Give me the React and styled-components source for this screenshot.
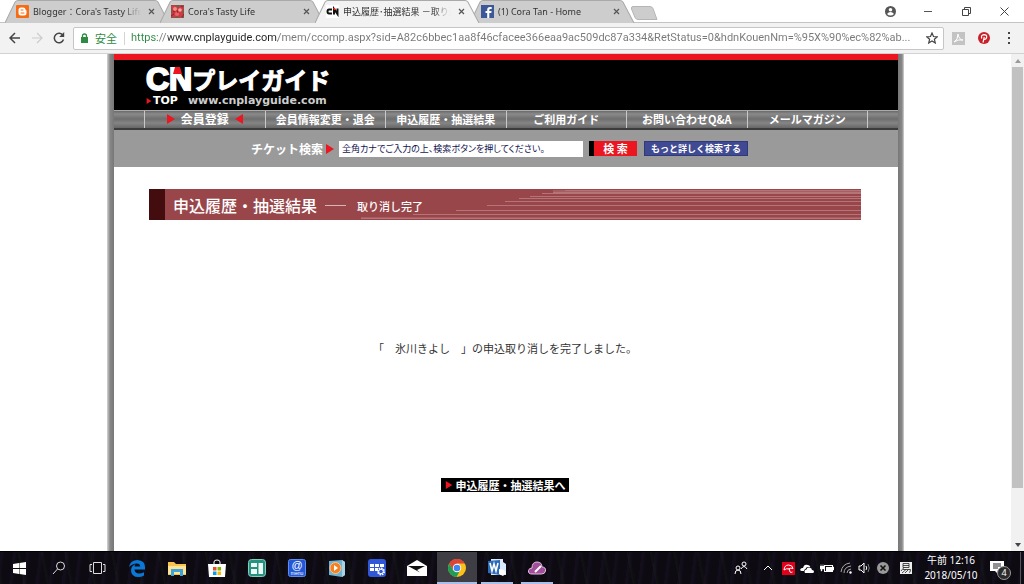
import React from "react";
import styled, { createGlobalStyle, css } from "styled-components";

const latin = `"Noto Sans", "Noto Sans CJK JP", sans-serif`;
const jp = `"Noto Sans CJK JP", sans-serif`;

const GlobalStyle = createGlobalStyle`
  * { box-sizing: border-box; }
  body { margin: 0; background: #fff; color: #333; font: 11px/16px ${jp}; }
  button, input { font: inherit; margin: 0; padding: 0; border: 0; border-radius: 0; background: none; color: inherit; }
  svg { display: block; flex: none; }
`;

const Window = styled.div`
  display: flex;
  flex-direction: column;
  min-height: 100vh;
`;

/* ---------- tab strip ---------- */

const TabStrip = styled.div`
  display: flex;
  height: 23px;
  padding-left: 5px;
  background: #fff;
  border-bottom: 1px solid #c4c4c4;
`;

const TabList = styled.div`
  display: flex;
  flex: 1;
  min-width: 0;
`;

const TabBox = styled.div`
  position: relative;
  z-index: ${(p) => (p.$active ? 2 : 1)};
  display: flex;
  align-items: center;
  gap: 4px;
  flex: 0 1 165px;
  min-width: 0;
  height: 23px;
  padding: 0 13px 0 11px;
  margin-right: -10px;
  font: 9px/16px ${latin};
  color: #333;
`;

const TabShape = styled.svg`
  position: absolute;
  inset: 0;
  z-index: -1;
  width: 100%;
  height: 100%;
`;

const TabTitle = styled.span`
  flex: 1;
  min-width: 0;
  overflow: hidden;
  white-space: nowrap;
  mask-image: linear-gradient(90deg, #000 calc(100% - 18px), transparent);
`;

const IconButton = styled.button`
  display: grid;
  place-items: center;
  flex: none;
  width: ${(p) => p.$w || 12}px;
  height: ${(p) => p.$h || 16}px;
`;

const NewTab = styled.button`
  width: 28px;
  height: 14px;
  margin: 6px 0 0 5px;
`;

const WindowControls = styled.div`
  display: flex;
  align-items: center;
  padding-right: 1px;
`;

/* ---------- toolbar ---------- */

const Toolbar = styled.div`
  display: flex;
  align-items: center;
  height: 31px;
  padding: 0 2px 0 3px;
  background: #f2f2f2;
  border-bottom: 1px solid #d2d2d2;
`;

const AddressBar = styled.div`
  display: flex;
  align-items: center;
  flex: 1;
  min-width: 0;
  height: 23px;
  margin-left: 3px;
  padding-left: 7px;
  background: #fff;
  border: 1px solid #c6c6c6;
  border-radius: 2px;
`;

const Secure = styled.span`
  margin-left: 7px;
  padding-right: 7px;
  border-right: 1px solid #d4d4d4;
  font-size: 11px;
  line-height: 13px;
  color: #2f8a43;
`;

const UrlInput = styled.input`
  flex: 1;
  min-width: 0;
  height: 20px;
  margin-left: 6px;
  font: 11px/20px Roboto, sans-serif;
  color: transparent;
  background: linear-gradient(90deg, #2f8a43 27px, #777 27px 37px, #222 37px 147px, #777 147px);
  background-clip: text;
  -webkit-background-clip: text;
`;

/* ---------- page ---------- */

const Viewport = styled.div`
  display: flex;
  flex: 1;
  background: #fff;
`;

const Scroller = styled.div`
  flex: 1;
  display: flex;
  justify-content: center;
  min-width: 0;
`;

const Site = styled.div`
  width: 100%;
  max-width: 797px;
  padding: 0 6px 0 7px;
  background:
    linear-gradient(90deg, #d5d5d5, #888 3px, #777 7px) left / 7px 100% no-repeat,
    linear-gradient(90deg, #777, #888 4px, #d5d5d5 6px) right / 6px 100% no-repeat;
`;

const Header = styled.header`
  height: 56px;
  padding: 6px 0 0 32px;
  background: #000;
  border-top: 6px solid #ec1620;
  color: #fff;
`;

const Logo = styled.a`
  display: inline-block;
  color: #fff;
  text-decoration: none;
`;

const LogoName = styled.span`
  display: flex;
  align-items: center;
  height: 27px;
  font: bold 23px/27px ${jp};
  -webkit-text-stroke: 1px #fff;
`;

const LogoMark = styled.span`
  position: relative;
  font: bold 32px/27px "Liberation Sans", sans-serif;
  -webkit-text-stroke: 2px #fff;
`;

const LogoAccent = styled.svg`
  position: absolute;
  left: 27px;
  top: 1px;
`;

const LogoLine = styled.span`
  display: flex;
  align-items: center;
  gap: 1px;
  height: 11px;
  margin-top: 2px;
  font: bold 11px/11px "DejaVu Sans", sans-serif;
`;

const LogoUrl = styled.span`
  margin-left: 9px;
  color: #ccc;
`;

const Nav = styled.nav`
  display: flex;
  height: 20px;
  padding: 0 30px;
  border-top: 1px solid #aaa;
  border-bottom: 2px solid #3c3c3c;
  background: linear-gradient(#6a6a6a, #8a8a8a 3px, #6e6e6e 8px, #858585 12px, #666);
`;

const NavLink = styled.a`
  display: flex;
  align-items: center;
  justify-content: center;
  gap: 5px;
  flex: 1;
  padding-bottom: 2px;
  border-left: 1px solid #c8c8c8;
  color: #fff;
  font-weight: bold;
  font-size: ${(p) => (p.$big ? 12 : 11)}px;
  line-height: 16px;
  white-space: nowrap;
  text-decoration: none;
  &:last-child { border-right: 1px solid #c8c8c8; }
`;

const SearchForm = styled.form`
  display: flex;
  align-items: center;
  height: 37px;
  padding-left: 137px;
  background: #9a9a9a;
`;

const SearchLabel = styled.label`
  display: flex;
  align-items: center;
  gap: 2px;
  color: #fff;
  font-size: 12px;
  font-weight: bold;
`;

const SearchInput = styled.input`
  width: 244px;
  height: 16px;
  margin-left: 4px;
  padding-left: 3px;
  background: #fff;
  color: #14144f;
  font: 9px/16px ${jp};
  font-feature-settings: "palt";
`;

const SearchButton = styled.button`
  height: 15px;
  margin-left: ${(p) => (p.$wide ? 7 : 6)}px;
  color: #fff;
  font-weight: bold;
  line-height: 13px;
  white-space: nowrap;
  ${(p) =>
    p.$wide
      ? css`
          width: 104px;
          background: #404a92;
          border: 1px solid #303a78;
          font-size: 9px;
        `
      : css`
          width: 48px;
          background: #ec1620;
          border-left: 5px solid #000;
          font-size: 11px;
        `}
`;

const Main = styled.main`
  padding: 22px 37px 32px 35px;
`;

const Banner = styled.div`
  position: relative;
  display: flex;
  align-items: center;
  height: 31px;
  padding-left: 8px;
  border-left: 16px solid #430d10;
  background: #99464b;
  color: #fff;
`;

const BannerLines = styled.svg`
  position: absolute;
  inset: 0;
  width: 100%;
  height: 100%;
`;

const Title = styled.h1`
  position: relative;
  display: flex;
  align-items: center;
  margin: 0;
  font-size: 16px;
  font-weight: 500;
  line-height: 24px;
`;

const Rule = styled.span`
  width: 21px;
  height: 1px;
  margin: 2px 11px 0 8px;
  background: #d9b4b6;
`;

const Subtitle = styled.small`
  padding-top: 2px;
  font-size: 11px;
`;

const Message = styled.p`
  margin: 120px 0 0;
  text-align: center;
  font-size: 11px;
  line-height: 16px;
`;

const Actions = styled.div`
  display: flex;
  justify-content: center;
  margin-top: 122px;
`;

const ResultButton = styled.button`
  display: flex;
  align-items: center;
  justify-content: center;
  gap: 3px;
  width: 128px;
  height: 14px;
  background: #000;
  color: #fff;
  font-size: 11px;
  font-weight: bold;
  line-height: 14px;
  white-space: nowrap;
`;

const Scrollbar = styled.div`
  display: flex;
  flex-direction: column;
  align-items: center;
  width: 13px;
  background: #f1f1f1;
`;

const Thumb = styled.div`
  flex: 421;
  width: 11px;
  background: #c1c1c1;
`;

const Track = styled.div`
  flex: 50;
`;

/* ---------- taskbar ---------- */

const Taskbar = styled.footer`
  display: flex;
  height: 33px;
  color: #fff;
  background:
    repeating-linear-gradient(97deg, rgba(58, 38, 82, 0.14) 0 2px, transparent 5px 13px),
    repeating-linear-gradient(79deg, rgba(30, 52, 24, 0.18) 0 1px, transparent 4px 23px),
    #0d0a12;
  border-top: 1px solid #000;
`;

const Apps = styled.div`
  display: flex;
  flex: 1;
`;

const AppButton = styled.button`
  display: grid;
  place-items: center;
  width: ${(p) => (p.$system ? 39 : 40)}px;
  height: 32px;
  background: ${(p) => (p.$current ? "#403e45" : "none")};
  ${(p) =>
    p.$open &&
    css`
      background-image: linear-gradient(#a8bfe8, #a8bfe8);
      background-size: ${p.$current ? "100%" : "32px"} 2px;
      background-position: bottom;
      background-repeat: no-repeat;
    `}
`;

const Tray = styled.div`
  display: flex;
  align-items: center;
`;

const Clock = styled.time`
  width: 64px;
  text-align: center;
  font: 10px/15px ${latin};
`;

const Notice = styled.button`
  position: relative;
  display: grid;
  place-items: center;
  width: 38px;
  height: 32px;
  padding-right: 10px;
  border-right: 1px solid #555;
  margin-right: 3px;
`;

const Badge = styled.span`
  position: absolute;
  left: 14px;
  top: 14px;
  width: 14px;
  height: 14px;
  border: 1px solid #999;
  border-radius: 50%;
  background: #2b2b2b;
  font: 9px/12px ${latin};
`;

/* ---------- drawings ---------- */

const Svg = ({ w = 16, h = w, box, children, ...rest }) => (
  <svg width={w} height={h} viewBox={box || `0 0 ${w} ${h}`} fill="none" aria-hidden="true" {...rest}>
    {children}
  </svg>
);

const Triangle = ({ size = 10, flip }) => (
  <Svg w={size} box="0 0 10 10">
    <path d={flip ? "M9 0v10L1 5z" : "M1 0v10L9 5z"} fill="#ec1620" />
  </Svg>
);

const Cross = () => (
  <Svg w={7}>
    <path d="M1 1l5 5M6 1L1 6" stroke="#555" strokeWidth="1.2" />
  </Svg>
);

const BloggerIcon = () => (
  <Svg w={13}>
    <rect width="13" height="13" rx="1" fill="#f76b13" />
    <path d="M5 2.500h2q2.500 0 2.500 2 .2.8 1 1v2.500q0 2.500-2.500 2.500H5Q2.500 10.500 2.500 8V5q0-2.500 2.500-2.500z" fill="#fff" />
    <path d="M5 5h2M5 8h3" stroke="#f76b13" strokeLinecap="round" />
  </Svg>
);

const FlowerIcon = () => (
  <Svg w={13}>
    <rect width="13" height="13" fill="#7d5a48" />
    <path d="M0 1l4-1 3 3 4-3 2 3-2 4 2 3-4 3-3-2-4 2-2-4 2-2z" fill="#cf3b45" />
    <circle cx="4" cy="4" r="2" fill="#f08c8c" />
    <circle cx="9" cy="5" r="1.8" fill="#f7aaa4" />
    <circle cx="6" cy="9" r="2" fill="#e86469" />
    <path d="M0 11l3-2M10 1l2 1M11 12l2-3M6 5l1 3M2 6l2 1" stroke="#9a1c24" />
  </Svg>
);

const CnIcon = () => (
  <Svg w={13}>
    <rect width="13" height="13" fill="#fff" />
    <path d="M6 4.500H3Q1.500 4.500 1.500 6.500T3 8.500h3M8 9.500V4l3.500 5V3.500" stroke="#111" strokeWidth="2" />
    <path d="M7 3h2l1 2H8z" fill="#e21" />
  </Svg>
);

const FacebookIcon = () => (
  <Svg w={13}>
    <rect width="13" height="13" fill="#3b5998" />
    <path d="M8.300 13V8h2l.3-2H8.300V5q0-1 1-1h1.400V2H9Q6.200 2 6.200 4.600V6H4.500v2h1.700v5z" fill="#fff" />
  </Svg>
);

const trayIcons = [
  ["連絡先", 30, <Svg w={14}><g stroke="#fff"><circle cx="10" cy="3" r="2" /><circle cx="4" cy="7" r="2" /><path d="M7 8q3-5 6 0M1 13q0-4 3-4t3 4" /></g></Svg>],
  ["隠れているインジケーター", 24, <Svg w={10} h={6}><path d="M1 5l4-4 4 4" stroke="#fff" /></Svg>],
  ["Avira", 17, <Svg w={13}><rect width="13" height="13" fill="#e2001a" /><path d="M2 8Q2.500 3 6.500 3T11 6.500Q8.500 5.500 7 7 4.500 6 2 8z" stroke="#fff" /><path d="M7 6l1 4q1 1 2.500 0" stroke="#fff" /></Svg>],
  ["OneDrive", 20, <Svg w={14} h={9}><path d="M2 7Q-.5 7 .5 5 1.500 3.500 3 4 4-.5 8 1q2 .5 2.300 2H8Q6 3 5.500 5 4 5.500 4 7z" fill="#fff" /><path d="M5 9q-1.500-3 1.500-3.500Q7 3 9.500 3.500T12 6q2 0 2 1.500T12.500 9z" fill="#fff" /></Svg>],
  ["電源", 19, <Svg w={14} h={9}><rect x="4.500" y="1.500" width="8" height="6" stroke="#fff" /><rect x="6" y="3" width="6" height="4" fill="#fff" /><path d="M13 3h1v3h-1zM0 2h4v3H2v2H1V5H0zM1 0v2M3 0v2" fill="#fff" stroke="#fff" strokeWidth=".4" /></Svg>],
  ["ネットワーク", 20, <Svg w={12}><g stroke="#aaa"><path d="M1 10Q2 2 10 1M4 11q0-6 7-7M7 11q0-3.500 4-4" /></g><circle cx="10.500" cy="10.500" r="1.200" fill="#fff" /></Svg>],
  ["音量", 17, <Svg w={13} h={12}><path d="M1 4h2l3-3v10L3 8H1z" stroke="#fff" /><path d="M8 4q1.500 2 0 4" stroke="#fff" /><path d="M10 2q2.500 4 0 8" stroke="#777" /></Svg>],
  ["接続なし", 20, <Svg w={12}><circle cx="6" cy="6" r="6" fill="#999" /><path d="M3.500 3.500l5 5M8.500 3.500l-5 5" stroke="#111" strokeWidth="1.600" /></Svg>],
  ["入力方式", 26, <Svg w={12}><rect width="12" height="12" fill="#eee" /><path d="M3 1.500h6v4H3zM3 3.500h6M4 5.500L1 9M3 7.500h7.500q0 3-1.500 3M6 7.500L2 11M8.500 7.500L5 11" stroke="#222" strokeWidth=".8" /></Svg>],
];

const apps = [
  { name: "スタート", system: true, icon: <Svg w={13}><path d="M0 2l6-1v5H0zM6.500 1L13 0v6H6.500zM0 7h6v5l-6-1zM6.500 7H13v6l-6.500-1z" fill="#fff" /></Svg> },
  { name: "検索", system: true, icon: <Svg w={14}><circle cx="8.500" cy="5" r="4" stroke="#ddd" /><path d="M5.500 8L1 13" stroke="#ddd" /></Svg> },
  { name: "タスクビュー", system: true, icon: <Svg w={17} h={12}><path d="M4.500.5h8v11h-8zM3 2.500H1v7h2M14 2.500h2v7h-2" stroke="#ddd" /></Svg> },
  { name: "Edge", icon: <Svg w={16} h={17}><path d="M0 7Q1.500 0 8.500 0 16 .5 16 7v2.500H5.500q.3 4 4.700 4 2.500 0 4.800-1.300v3.300Q12.500 17 9.500 17 2 17 2 10.200 2.200 6 6.500 4 5.500 5.500 5.500 6.500h5.700Q11 3.500 8 3.500 3 3.500 0 7z" fill="#0a78d7" /></Svg> },
  { name: "エクスプローラー", icon: <Svg w={18} h={15}><path d="M0 1h6l2 2h10v11H0z" fill="#f5c54f" /><path d="M0 5h18v8H0z" fill="#ffe494" /><path d="M3 15V8h12v7h-3v-4H6v4z" fill="#3ba4dc" /></Svg> },
  { name: "ストア", icon: <Svg w={18} h={18}><path d="M6 5V3q0-2 3-2t3 2v2" stroke="#fff" /><path d="M0 5h18l-1 13H1z" fill="#fff" /><path d="M5 8h3.500v3.500H5z" fill="#ef4a23" /><path d="M9.500 8H13v3.500H9.500z" fill="#7db700" /><path d="M5 12.500h3.500V16H5z" fill="#00a1ec" /><path d="M9.500 12.500H13V16H9.500z" fill="#fdb700" /></Svg> },
  { name: "ダッシュボード", icon: <Svg w={18}><rect x=".5" y=".5" width="17" height="17" rx="3" fill="#249480" stroke="#89cabc" /><path d="M3 4h6v4H3zM3 10h6v5H3zM10.500 4H15v11h-4.500z" fill="#eefaf6" /></Svg> },
  { name: "@menu", icon: <Svg w={18}><rect x=".5" y=".5" width="17" height="17" rx="2" fill="#2457d6" stroke="#5f8cf2" /><text x="9" y="10" textAnchor="middle" fontFamily="Liberation Sans" fontSize="11" fill="#fff">@</text><text x="9" y="16" textAnchor="middle" fontFamily="Liberation Sans" fontSize="5" fill="#fff">menu</text></Svg> },
  { name: "メディアプレーヤー", icon: <Svg w={16} h={17}><path d="M0 1l13-1 3 2v13l-3 2-13-2z" fill="#6fb3d2" /><path d="M13 0l3 2v13l-3 2z" fill="#a6d4e6" /><circle cx="6.500" cy="8" r="5.500" fill="#f38024" stroke="#ffc58a" /><path d="M5 5v6l4-3z" fill="#fff" /></Svg> },
  { name: "アプリ設定", icon: <Svg w={18}><rect width="18" height="18" rx="3" fill="#3057d8" /><path d="M2 5h4v3H2zM7 5h4v3H7zM12 5h4v3h-4zM2 9h4v3H2zM7 9h3v3H7z" fill="#fff" /><circle cx="13" cy="12.500" r="3" stroke="#fff" strokeWidth="2" strokeDasharray="1.500 .8" /><circle cx="13" cy="12.500" r="2.300" fill="#3057d8" stroke="#fff" /></Svg> },
  { name: "メール", icon: <Svg w={20} h={16}><path d="M0 6l10-6 10 6v10H0z" fill="#fff" /><path d="M1 6h17l-8 4 3 2.500z" fill="#111" /></Svg> },
  { name: "Chrome", current: true, open: true, icon: <Svg w={18}><circle cx="9" cy="9" r="9" fill="#fbc116" /><path d="M1.200 4.500A9 9 0 0116.800 4.500H9L5.100 11.300z" fill="#db4437" /><path d="M1.200 4.500L5.100 11.300Q8 14 11.500 12.500L8.500 18A9 9 0 011.200 4.500z" fill="#1f9d57" /><circle cx="9" cy="9" r="4.200" fill="#fff" /><circle cx="9" cy="9" r="3.300" fill="#4285f4" /></Svg> },
  { name: "Word", open: true, icon: <Svg w={18}><path d="M3 0h12v3l3 2v11H3z" fill="#dbe9f8" /><path d="M0 2l12-1v15L0 14z" fill="#2b6cb8" /><path d="M2 4l2 8 2-7 2 7 2-8" stroke="#fff" strokeWidth="1.600" /><path d="M11 10l5 1 2 3-3 3-4-2z" fill="#fff" /></Svg> },
  { name: "クラウドノート", open: true, icon: <Svg w={18} h={14}><path d="M4 13Q0 13 .5 9.500 1 7 4 7q0-6 5-6t5 5q4 0 3.500 4-.5 3-4 3z" fill="#a24f9b" stroke="#e2bfe0" /><path d="M7 11l6-6" stroke="#fff" strokeWidth="2" /></Svg> },
];

const tabs = [
  { title: "Blogger：Cora's Tasty Life", icon: <BloggerIcon /> },
  { title: "Cora's Tasty Life", icon: <FlowerIcon /> },
  { title: "申込履歴･抽選結果 －取り消し完了", icon: <CnIcon />, active: true },
  { title: "(1) Cora Tan - Home", icon: <FacebookIcon /> },
];

const navItems = ["会員情報変更・退会", "申込履歴・抽選結果", "ご利用ガイド", "お問い合わせQ&A", "メールマガジン"];

const bannerStripes = [
  [400, 1], [388, 3], [377, 4], [365, 7], [354, 9], [340, 12], [322, 16], [291, 21], [248, 25], [196, 29],
];

const Tab = ({ title, icon, active }) => (
  <TabBox $active={active}>
    <TabShape viewBox="0 0 164 23" preserveAspectRatio="none" aria-hidden="true">
      <path
        d="M0 23L10 2Q11 .5 13 .5H149Q151 .5 152 2L163 23"
        fill={active ? "#f2f2f2" : "#cdcdcd"}
        stroke="#a9a9a9"
      />
    </TabShape>
    {icon}
    <TabTitle>{title}</TabTitle>
    <IconButton aria-label={`${title} を閉じる`}><Cross /></IconButton>
  </TabBox>
);

const Browser = () => (
  <>
    <TabStrip>
      <TabList>
        {tabs.map((t) => <Tab key={t.title} {...t} />)}
        <NewTab aria-label="新しいタブ">
          <Svg w={28} h={14}>
            <path d="M3 .5h17q2 0 3 2l4 11H8q-2 0-3-2L1.500 3Q1 .5 3 .5z" fill="#cdcdcd" stroke="#b5b5b5" />
          </Svg>
        </NewTab>
      </TabList>
      <WindowControls>
        <IconButton $w={38} aria-label="ユーザー">
          <Svg w={11}><circle cx="5.500" cy="5.500" r="5.500" fill="#555" /><circle cx="5.500" cy="3.800" r="1.800" fill="#fff" /><path d="M2 8q1.500-2 3.500-2T9 8q-1.500 1.500-3.500 1.500T2 8z" fill="#fff" /></Svg>
        </IconButton>
        <IconButton $w={38} aria-label="最小化"><Svg w={8}><path d="M0 4.500h8" stroke="#555" /></Svg></IconButton>
        <IconButton $w={38} aria-label="元に戻す"><Svg w={9}><path d="M.5 2.500h6v6h-6zM2.500 2.500v-2h6v6h-2" stroke="#444" /></Svg></IconButton>
        <IconButton $w={38} aria-label="閉じる"><Svg w={9}><path d="M.5.5l8 8M8.500.5l-8 8" stroke="#444" /></Svg></IconButton>
      </WindowControls>
    </TabStrip>
    <Toolbar>
      <IconButton $w={23} aria-label="戻る"><Svg w={12}><path d="M11 6H1.500M6 1L1 6l5 5" stroke="#444" strokeWidth="1.500" /></Svg></IconButton>
      <IconButton $w={22} aria-label="進む"><Svg w={12}><path d="M1 6h9.500M6 1l5 5-5 5" stroke="#ccc" strokeWidth="1.200" /></Svg></IconButton>
      <IconButton $w={22} aria-label="再読み込み"><Svg w={12}><path d="M10 3.500A4.700 4.700 0 1010.500 7.500" stroke="#444" strokeWidth="1.500" /><path d="M11.200 0v5h-5z" fill="#444" /></Svg></IconButton>
      <AddressBar>
        <Svg w={7} h={10}><path d="M1.500 5V3q0-2 2-2t2 2v2" stroke="#2f8a43" strokeWidth="1.300" /><path d="M0 4h7v6H0z" fill="#2f8a43" /></Svg>
        <Secure>安全</Secure>
        <UrlInput
          aria-label="アドレス"
          defaultValue="https://www.cnplayguide.com/mem/ccomp.aspx?sid=A82c6bbec1aa8f46cfacee366eaa9ac509dc87a334&RetStatus=0&hdnKouenNm=%95X%90%ec%82%ab..."
        />
        <IconButton $w={22} aria-label="ブックマーク"><Svg w={12}><path d="M6 1l1.500 3.500 3.800.3-2.900 2.500.9 3.700L6 9l-3.300 2 .9-3.700L.7 4.800l3.800-.3z" stroke="#444" strokeWidth="1.200" /></Svg></IconButton>
      </AddressBar>
      <IconButton $w={28} aria-label="PDF"><Svg w={13}><path d="M0 0h13v13H0z" fill="#c3c3c3" /><path d="M2 10q4-2 4-8 1 6 5 6Q6 7 2 10z" stroke="#fff" /></Svg></IconButton>
      <IconButton $w={24} aria-label="Pinterest"><Svg w={12}><circle cx="6" cy="6" r="6" fill="#cb2027" /><path d="M5 10.500l1.300-5.500M3.800 6.500Q2.500 3 6 2.600 9 2.600 8.700 5 8 8 6 7.200" stroke="#fff" strokeWidth="1.200" /></Svg></IconButton>
      <IconButton $w={26} aria-label="メニュー"><Svg w={2} h={12}><path d="M0 0h2v2H0zM0 5h2v2H0zM0 10h2v2H0z" fill="#444" /></Svg></IconButton>
    </Toolbar>
  </>
);

const SitePage = () => (
  <Site>
    <Header>
      <Logo href="#top">
        <LogoName>
          <LogoMark>
            CN
            <LogoAccent width="9" height="7" aria-hidden="true"><path d="M2 0h5l2 7H0z" fill="#ec1620" /></LogoAccent>
          </LogoMark>
          プレイガイド
        </LogoName>
        <LogoLine>
          <Triangle size={6} />
          TOP
          <LogoUrl>www.cnplayguide.com</LogoUrl>
        </LogoLine>
      </Logo>
    </Header>
    <Nav>
      <NavLink href="#register" $big><Triangle />会員登録<Triangle flip /></NavLink>
      {navItems.map((n) => <NavLink key={n} href="#menu">{n}</NavLink>)}
    </Nav>
    <SearchForm onSubmit={(e) => e.preventDefault()}>
      <SearchLabel htmlFor="ticket">チケット検索<Triangle /></SearchLabel>
      <SearchInput id="ticket" defaultValue="全角カナでご入力の上、検索ボタンを押してください。" />
      <SearchButton type="submit">検 索</SearchButton>
      <SearchButton type="button" $wide>もっと詳しく検索する</SearchButton>
    </SearchForm>
    <Main>
      <Banner>
        <BannerLines aria-hidden="true">
          <rect x="388" y="1" width="100%" height="4" fill="#a75d61" />
          <rect x="196" y="28" width="100%" height="2" fill="#a75d61" />
          {bannerStripes.map(([x, y]) => (
            <line key={y} x1={x} x2="100%" y1={y + 0.5} y2={y + 0.5} stroke="#b47478" />
          ))}
        </BannerLines>
        <Title>
          申込履歴・抽選結果
          <Rule />
          <Subtitle>取り消し完了</Subtitle>
        </Title>
      </Banner>
      <Message>「　氷川きよし　」の申込取り消しを完了しました。</Message>
      <Actions>
        <ResultButton><Triangle size={8} />申込履歴・抽選結果へ</ResultButton>
      </Actions>
    </Main>
  </Site>
);

export default function App() {
  return (
    <Window>
      <GlobalStyle />
      <Browser />
      <Viewport>
        <Scroller><SitePage /></Scroller>
        <Scrollbar>
          <IconButton $w={13} $h={13} aria-label="上へ"><Svg w={6} h={4}><path d="M0 4l3-4 3 4z" fill="#999" /></Svg></IconButton>
          <Thumb />
          <Track />
          <IconButton $w={13} $h={13} aria-label="下へ"><Svg w={6} h={4}><path d="M0 0l3 4 3-4z" fill="#444" /></Svg></IconButton>
        </Scrollbar>
      </Viewport>
      <Taskbar>
        <Apps>
          {apps.map((a) => (
            <AppButton key={a.name} aria-label={a.name} $system={a.system} $open={a.open} $current={a.current}>
              {a.icon}
            </AppButton>
          ))}
        </Apps>
        <Tray>
          {trayIcons.map(([name, w, icon]) => (
            <IconButton key={name} $w={w} $h={32} aria-label={name}>{icon}</IconButton>
          ))}
          <Clock>午前 12:16<br />2018/05/10</Clock>
          <Notice aria-label="通知">
            <Svg w={14}><path d="M0 0h14v10H8v3l-3-3H0z" fill="#fff" /><path d="M3 3h8M3 5h8M3 7h5" stroke="#222" /></Svg>
            <Badge>4</Badge>
          </Notice>
        </Tray>
      </Taskbar>
    </Window>
  );
}
